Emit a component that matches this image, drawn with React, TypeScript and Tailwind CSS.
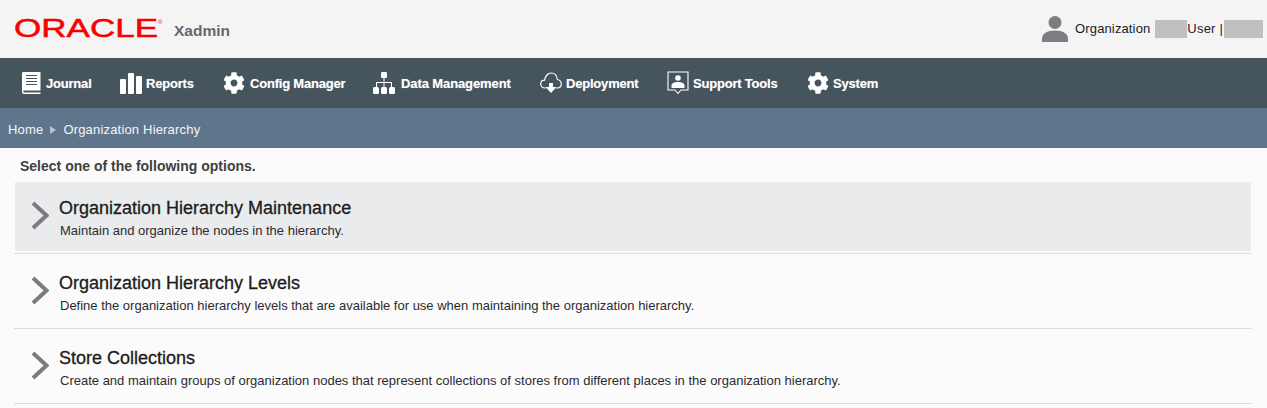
import { FaCog } from "react-icons/fa";
import { ReactNode } from "react";

const JournalIcon = () => (
  <svg width="19" height="22" viewBox="0 0 19 22">
    <path d="M1.5 0H18.5V18.5H2.5C1.7 18.5 1.2 19 1.2 19.5S1.7 20.5 2.5 20.5H18.5V22H2C.8 22 0 21.2 0 20V1.5C0 .6.6 0 1.5 0Z" fill="#fff" />
    <path d="M4 3.5H15M4 6.5H15M4 9.5H15M4 12.5H15" stroke="#46545e" strokeWidth="1.2" />
  </svg>
);

const ReportsIcon = () => (
  <svg width="22" height="21" viewBox="0 0 22 21" fill="#fff">
    <rect x="0" y="6" width="6" height="15" rx="1" />
    <rect x="8" y="0" width="6" height="21" rx="1" />
    <rect x="16" y="3" width="6" height="18" rx="1" />
  </svg>
);

const DataIcon = () => (
  <svg width="22" height="22" viewBox="0 0 22 22" fill="#fff">
    <rect x="8" y="0" width="6" height="6" rx="1" />
    <path d="M10.5 6H11.5V10H19V15H18V11H11.5V15H10.5V11H4V15H3V10H10.5Z" />
    <rect x="0" y="15" width="6" height="7" rx="1.5" />
    <rect x="8" y="15" width="6" height="7" rx="1.5" />
    <rect x="16" y="15" width="6" height="7" rx="1.5" />
  </svg>
);

const DeployIcon = () => (
  <svg width="22" height="22" viewBox="0 0 22 22" fill="none">
    <path d="M6 16H5C2.5 16 .7 14.2.7 12C.7 9.8 2.4 8.2 4.6 8.2C5.2 4 8 1 11.2 1C14.8 1 17 4 17.4 7.5C19.6 8 21.3 9.6 21.3 12C21.3 14.2 19.6 16 17 16H16" stroke="#fff" strokeWidth="1.2" />
    <path d="M9 11H13V15H16.5L11 21L5.5 15H9Z" fill="#fff" />
  </svg>
);

const SupportIcon = () => (
  <svg width="22" height="24" viewBox="0 0 22 24" fill="none">
    <path d="M1 1H21V19H14L11 22.5L8 19H1Z" stroke="#fff" strokeWidth="1.1" />
    <circle cx="11" cy="7" r="2.8" fill="#fff" />
    <path d="M4.5 17V14.5C4.5 12.5 7 11 11 11S17.5 12.5 17.5 14.5V17Z" fill="#fff" />
  </svg>
);

const UserIcon = () => (
  <svg width="26" height="26" viewBox="0 0 26 26" fill="#7b7e83">
    <circle cx="13" cy="6.5" r="6.5" />
    <path d="M0 23C0 17.5 5 14.5 13 14.5S26 17.5 26 23V26H0Z" />
  </svg>
);

const OracleLogo = () => (
  <svg width="150" height="24" viewBox="0 0 150 24" className="block overflow-visible">
    <text
      x="0"
      y="19.5"
      textLength="144"
      lengthAdjust="spacingAndGlyphs"
      fill="#f80000"
      fontFamily="'Liberation Sans', Arial, sans-serif"
      fontSize="25"
      fontWeight="400"
      stroke="#f80000"
      strokeWidth="0.5"
    >
      ORACLE
    </text>
    <text x="144" y="7" fill="#f80000" fontFamily="'Liberation Sans', Arial, sans-serif" fontSize="6">
      ®
    </text>
  </svg>
);

const navItems: { label: string; icon: ReactNode; gap: string; width: string; track: string }[] = [
  { label: "Journal", icon: <JournalIcon />, gap: "gap-[5px]", width: "w-[98px]", track: "tracking-[-0.2px]" },
  { label: "Reports", icon: <ReportsIcon />, gap: "gap-[4px]", width: "w-[103px]", track: "tracking-[-0.2px]" },
  { label: "Config Manager", icon: <FaCog size={22} color="#fff" />, gap: "gap-[5px]", width: "w-[150px]", track: "tracking-[-0.2px]" },
  { label: "Data Management", icon: <DataIcon />, gap: "gap-[6px]", width: "w-[167px]", track: "tracking-[-0.1px]" },
  { label: "Deployment", icon: <DeployIcon />, gap: "gap-[4px]", width: "w-[127px]", track: "tracking-[-0.2px]" },
  { label: "Support Tools", icon: <SupportIcon />, gap: "gap-[4px]", width: "w-[140px]", track: "tracking-[-0.2px]" },
  { label: "System", icon: <FaCog size={22} color="#fff" />, gap: "gap-[4px]", width: "", track: "tracking-[-0.2px]" },
];

const options = [
  {
    title: "Organization Hierarchy Maintenance",
    text: "Maintain and organize the nodes in the hierarchy.",
    active: true,
  },
  {
    title: "Organization Hierarchy Levels",
    text: "Define the organization hierarchy levels that are available for use when maintaining the organization hierarchy.",
    active: false,
  },
  {
    title: "Store Collections",
    text: "Create and maintain groups of organization nodes that represent collections of stores from different places in the organization hierarchy.",
    active: false,
  },
];

const App = () => {
  return (
    <div className="h-[408px] w-[1267px] overflow-hidden bg-[#fbfbfb] font-['Liberation_Sans',Arial,sans-serif]">
      {/* header */}
      <header className="flex h-[58px] items-center justify-between bg-[#f4f4f4] pl-[14px] pr-[4px]">
        <div className="flex items-center">
          <OracleLogo />
          <span className="ml-[10px] mt-[3px] text-[15.5px] font-bold text-[#66676b]">Xadmin</span>
        </div>
        <div className="flex items-center text-[13px] tracking-[0.13px] text-[#1a1a2e]">
          <UserIcon />
          <span className="ml-[7px]">Organization</span>
          <span className="ml-[5px] h-[18px] w-[32px] bg-[#c0c0c0]"></span>
          <span className="tracking-[0.2px]">User |</span>
          <span className="ml-[1px] h-[18px] w-[39px] bg-[#c0c0c0]"></span>
        </div>
      </header>

      {/* nav */}
      <nav className="flex h-[50px] items-center bg-[#46545e] pl-[22px] text-[13px] font-bold text-white [text-shadow:0_0_1px_rgba(255,255,255,0.45)]">
        {navItems.map(item => (
          <div key={item.label} className={`flex items-center ${item.gap} ${item.width} ${item.track}`}>
            {item.icon}
            <span className="mt-[1px]">{item.label}</span>
          </div>
        ))}
      </nav>

      {/* breadcrumb */}
      <div className="flex h-[40px] items-center bg-[#5f758b] pl-[8px] pt-[3px] text-[13px] tracking-[0.18px] text-[#f4f6f8]">
        <span>Home</span>
        <span className="ml-[7px] mr-[7px] h-0 w-0 border-y-[4px] border-l-[6px] border-y-transparent border-l-[#b9c3cd]"></span>
        <span>Organization Hierarchy</span>
      </div>

      {/* options */}
      <main className="pl-[14px] pr-[15px]">
        <div className="flex h-[31px] items-end pb-[5px] pl-[6px] text-[14px] font-bold leading-[16px] text-[#3f3f3f]">
          Select one of the following options.
        </div>
        {options.map(option => (
          <div key={option.title} className="h-[75px] border-b border-[#dedede] pb-[2px] pt-[3px]">
            <div className={`mx-px flex h-[69px] items-center pl-[16px] ${option.active ? "bg-[#eaebed]" : ""}`}>
              <svg width="18" height="29" viewBox="0 0 18 29" fill="none" className="-mt-[2px]">
                <path d="M2 2L15.5 14.5L2 27" stroke="#7a7c80" strokeWidth="4" />
              </svg>
              <div className="ml-[10px] pt-[3px]">
                <div className="text-[18px] leading-[20px] text-[#1c1c1c] [-webkit-text-stroke:0.3px_#1c1c1c]">{option.title}</div>
                <div className="mt-[6px] pl-px text-[13px] leading-[14px] text-[#2b2b33]">{option.text}</div>
              </div>
            </div>
          </div>
        ))}
      </main>
    </div>
  );
};

export default App;
